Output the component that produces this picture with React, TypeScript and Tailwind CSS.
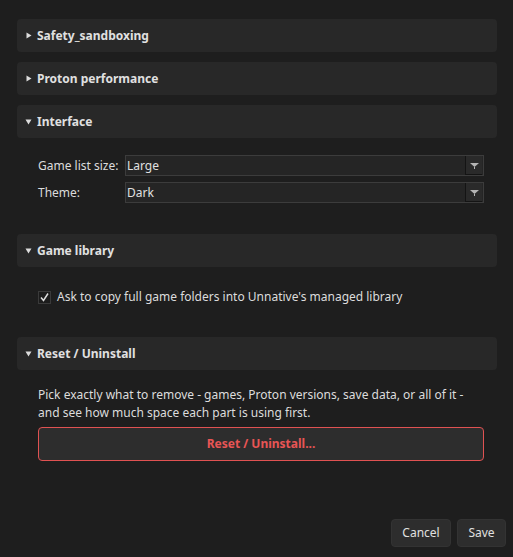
import React from 'react'

const font = { fontFamily: '"Noto Sans", "Open Sans", sans-serif' }

function Arrow({ open }: { open: boolean }) {
  return (
    <svg width="7" height="7" viewBox="0 0 7 7" className="shrink-0">
      {open ? (
        <polygon points="0.5,1.5 6.5,1.5 3.5,6.5" fill="#dcdcdc" />
      ) : (
        <polygon points="1.5,0.5 6.5,3.5 1.5,6.5" fill="#dcdcdc" />
      )}
    </svg>
  )
}

function SectionHeader({ title, open }: { title: string; open: boolean }) {
  return (
    <div className="flex h-[33px] items-center gap-[5px] rounded-[4px] bg-[#282828] pl-[8px] text-[12px] font-bold text-[#e0e0e0]">
      <Arrow open={open} />
      <span>{title}</span>
    </div>
  )
}

function Combo({ value }: { value: string }) {
  return (
    <div className="flex h-[21px] flex-1 items-center border border-[#3c3c3c] bg-[#252525] pl-[1px] text-[12px] text-[#e0e0e0]">
      <span className="flex-1">{value}</span>
      <div className="mr-[1px] flex h-[19px] w-[17px] items-center justify-center border-b border-l border-[#141414] bg-[#2a2a2a]">
        <svg width="9" height="7" viewBox="0 0 9 7">
          <polygon points="0,1 9,1 4.5,5" fill="#b4b4b4" />
          <rect x="4" y="5" width="1" height="2" fill="#b4b4b4" />
        </svg>
      </div>
    </div>
  )
}

export default function App() {
  return (
    <div style={font} className="flex h-[557px] w-[513px] flex-col bg-[#1e1e1e] pl-[17px] pr-[16px] pt-[19px] text-[12px] text-[#dcdcdc]">
      <SectionHeader title="Safety_sandboxing" open={false} />
      <div className="h-[10px]" />
      <SectionHeader title="Proton performance" open={false} />
      <div className="h-[10px]" />
      <SectionHeader title="Interface" open={true} />

      {/* interface content */}
      <div className="ml-[21px] mr-[13px] mt-[17px] flex flex-col gap-[6px]">
        <div className="flex items-center">
          <span className="w-[87px] whitespace-nowrap">Game list size:</span>
          <Combo value="Large" />
        </div>
        <div className="flex items-center">
          <span className="w-[87px] whitespace-nowrap">Theme:</span>
          <Combo value="Dark" />
        </div>
      </div>

      <div className="h-[31px]" />
      <SectionHeader title="Game library" open={true} />

      <div className="ml-[21px] mt-[21px] flex items-center gap-[6px]">
        <div className="flex h-[13px] w-[13px] items-center justify-center border border-[#3a3a3a] bg-[#1c1c1c]">
          <svg width="11" height="11" viewBox="0 0 11 11">
            <path d="M2 5.5 L4.5 8.5 L9 1.5" stroke="#dcdcdc" strokeWidth="1.5" fill="none" />
          </svg>
        </div>
        <span>Ask to copy full game folders into Unnative's managed library</span>
      </div>

      <div className="h-[31px]" />
      <SectionHeader title="Reset / Uninstall" open={true} />

      <div className="ml-[21px] mr-[13px] mt-[16px] flex flex-col">
        <p className="leading-[18px]">
          Pick exactly what to remove - games, Proton versions, save data, or all of it -
          <br />
          and see how much space each part is using first.
        </p>
        <button className="mt-[5px] h-[34px] rounded-[4px] border border-[#e05252] bg-[#2d2d2d] text-[12px] font-bold text-[#e85555]">
          Reset / Uninstall...
        </button>
      </div>

      <div className="flex-1" />
      <div className="-mr-[9px] mb-[10px] flex justify-end gap-[6px]">
        <button className="h-[28px] w-[60px] rounded-[4px] border border-[#333] bg-[#2d2d2d] text-[12px] text-[#e0e0e0]">
          Cancel
        </button>
        <button className="h-[28px] w-[49px] rounded-[4px] border border-[#333] bg-[#2d2d2d] text-[12px] text-[#e0e0e0]">
          Save
        </button>
      </div>
    </div>
  )
}
